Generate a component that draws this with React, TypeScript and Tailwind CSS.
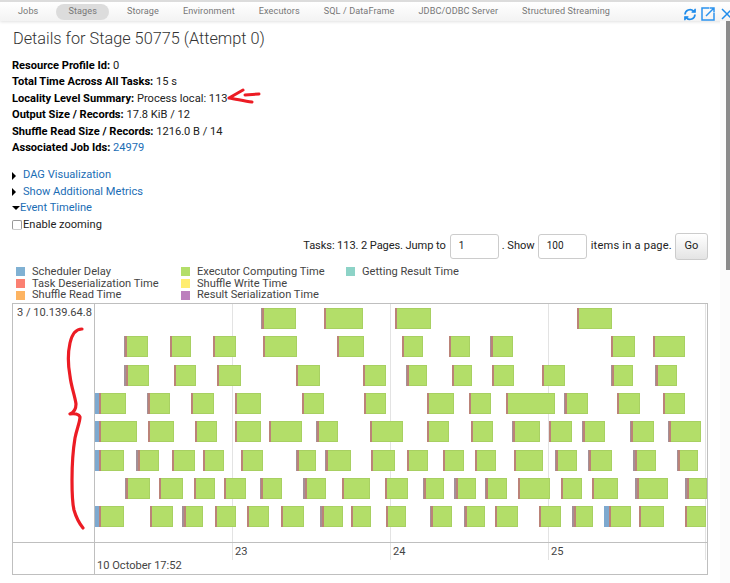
import React from 'react';

const TABS = ['Jobs', 'Stages', 'Storage', 'Environment', 'Executors', 'SQL / DataFrame', 'JDBC/ODBC Server', 'Structured Streaming'];

const SUMMARY: [string, string][] = [
  ['Resource Profile Id:', '0'],
  ['Total Time Across All Tasks:', '15 s'],
  ['Locality Level Summary:', 'Process local: 113'],
  ['Output Size / Records:', '17.8 KiB / 12'],
  ['Shuffle Read Size / Records:', '1216.0 B / 14'],
];

const LEGEND = [
  ['Scheduler Delay', 'bg-[#80b1d3]'],
  ['Executor Computing Time', 'bg-[#b3de69]'],
  ['Getting Result Time', 'bg-[#8dd3c7]'],
  ['Task Deserialization Time', 'bg-[#fb8072]'],
  ['Shuffle Write Time', 'bg-[#ffed6f]'],
  null,
  ['Shuffle Read Time', 'bg-[#fdb462]'],
  ['Result Serialization Time', 'bg-[#bc80bd]'],
  null,
];

// [start x, end x, blue width]
type Bar = [number, number, number?];

const ROWS: Bar[][] = [
  [[261, 296, 1], [324, 363], [395, 431], [577, 612]],
  [[124, 148, 1], [170, 191], [213, 236], [263, 297], [337, 364], [402, 423], [449, 470], [490, 513, 1], [611, 635], [653, 685]],
  [[124, 149, 2], [174, 196], [217, 241], [296, 320], [363, 386], [406, 427, 1], [452, 472], [492, 514], [542, 565], [611, 633, 1], [655, 677, 1]],
  [[95, 126, 4], [147, 170, 1], [191, 214], [235, 261], [302, 324], [364, 386], [427, 454], [469, 491], [506, 555], [564, 588, 1], [617, 640], [663, 685]],
  [[95, 137, 4], [148, 174], [195, 217], [235, 261], [269, 302], [316, 338, 1], [370, 403], [427, 449], [471, 493], [512, 540, 1], [549, 572], [582, 605, 1], [630, 654, 1], [668, 701, 1]],
  [[95, 124, 4], [136, 159, 2], [172, 195], [203, 224], [241, 263], [296, 316, 1], [325, 351, 1], [371, 395], [407, 428], [443, 464], [475, 496], [514, 543], [555, 577, 1], [588, 612, 1], [633, 656, 2], [677, 698, 1]],
  [[125, 150, 1], [159, 183], [194, 215], [224, 246], [260, 282, 1], [303, 326, 2], [342, 370], [385, 408], [423, 444, 1], [454, 476, 2], [485, 507, 1], [518, 550], [561, 582], [592, 618], [635, 668, 2], [685, 707, 2]],
  [[95, 124, 4], [150, 173], [182, 203, 2], [215, 236], [247, 269], [281, 304], [320, 343, 2], [351, 371], [386, 406], [430, 452, 1], [464, 485, 1], [495, 518], [539, 561], [572, 593, 2], [604, 631, 5], [639, 664], [685, 706]],
];

const GRID_LINES = [232, 390, 548, 705];
const AXIS_LABELS: [number, string][] = [[232, '23'], [390, '24'], [548, '25']];

function TimelineBar({ bar }: { bar: Bar }) {
  const [start, end, blue = 0] = bar;
  return (
    <div
      className="absolute top-0 flex h-[21px]"
      style={{ left: start - 95, width: end - start }}
    >
      {blue > 0 && (
        <div
          className={blue > 2 ? 'h-full bg-[#7ea9cf]' : 'h-full bg-[#a39098]'}
          style={{ width: blue }}
        />
      )}
      <div className="h-full w-[2px] shrink-0 bg-[#bb8378]" />
      <div className="h-full flex-1 border border-l-0 border-[#a8d062] bg-[#b3de69]" />
    </div>
  );
}

export default function App() {
  return (
    <div
      className="relative h-[583px] w-[730px] overflow-hidden bg-white text-[11.1px] leading-[16.4px] text-[#222]"
      style={{ fontFamily: 'Roboto, "Open Sans", sans-serif' }}
    >
      {/* Nav bar */}
      <div className="flex h-[21px] items-center border-t-2 border-[#dcdcdc] bg-gradient-to-b from-white to-[#f3f3f3] pl-[18px] text-[9.1px] tracking-[0.1px] text-[#777] shadow-[0_1px_3px_rgba(0,0,0,0.12)]">
        {TABS.map((tab) => (
          <span
            key={tab}
            className={
              tab === 'Stages'
                ? 'mr-[18px] ml-[-6px] flex h-[16px] items-center rounded-[8px] bg-[#dcdcdc] px-[12px]'
                : 'mr-[24px] whitespace-nowrap'
            }
          >
            {tab}
          </span>
        ))}
      </div>

      {/* Toolbar icons */}
      <div className="absolute left-[683px] top-[7px] flex items-center gap-[4px]">
        <svg width="14" height="13" viewBox="0 0 14 13" fill="none" stroke="#1f8ceb" strokeWidth="1.7">
          <path d="M2 6.5a5 5 0 0 1 8.6-3.3" />
          <path d="M12 6.5a5 5 0 0 1-8.6 3.3" />
          <path d="M8.6 4.2h3.6V.8" strokeWidth="1.3" fill="#1f8ceb" />
          <path d="M5.4 8.8H1.8v3.4" strokeWidth="1.3" fill="#1f8ceb" />
        </svg>
        <svg width="14" height="14" viewBox="0 0 14 14" fill="none" stroke="#2b93ee" strokeWidth="1.5">
          <path d="M8 1H1v12h12V6" />
          <path d="M5 9l8-8M8.5 1H13v4.5" />
        </svg>
        <svg className="ml-[2px]" width="12" height="12" viewBox="0 0 12 12" fill="none" stroke="#1f8ceb" strokeWidth="1.5">
          <path d="M1 1l10 10M11 1L1 11" />
        </svg>
      </div>

      {/* Scrollbar */}
      <div className="absolute bottom-0 right-0 top-[21px] w-[10px] bg-[#fbfbfb]">
        <div className="ml-[6px] h-[249px] w-[4px] bg-[#8a8a8a]" />
      </div>

      <h3 className="ml-[13px] mt-[7px] text-[16.3px] font-light leading-[22px] text-[#333]">
        Details for Stage 50775 (Attempt 0)
      </h3>

      {/* Summary */}
      <ul className="ml-[12px] mt-[8px]">
        {SUMMARY.map(([label, value]) => (
          <li key={label}>
            <strong className="font-bold text-black">{label}</strong> {value}
          </li>
        ))}
        <li>
          <strong className="font-bold text-black">Associated Job Ids:</strong>{' '}
          <a className="text-[#1a6db5]">24979</a>
        </li>
      </ul>

      {/* Collapsible links */}
      <div className="ml-[12px] mt-[11px] text-[#1a6db5]">
        <div className="flex items-center">
          <span className="mr-[7px] h-0 w-0 border-y-[4px] border-l-[4px] border-y-transparent border-l-black" />
          DAG Visualization
        </div>
        <div className="flex items-center">
          <span className="mr-[7px] h-0 w-0 border-y-[4px] border-l-[4px] border-y-transparent border-l-black" />
          Show Additional Metrics
        </div>
        <div className="flex items-center">
          <span className="h-0 w-0 border-x-[4px] border-t-[4px] border-x-transparent border-t-black" />
          Event Timeline
        </div>
        <label className="flex items-center text-[#222]">
          <span className="mr-[1px] h-[10px] w-[10px] rounded-[2px] border border-[#999] border-b-[#ccc] bg-white" />
          Enable zooming
        </label>
      </div>

      {/* Pagination */}
      <div className="mr-[22px] flex h-[27px] items-center justify-end">
        <span className="tracking-[-0.1px]">Tasks: 113. 2 Pages. Jump to</span>
        <div className="ml-[4px] flex h-[25px] w-[49px] items-center rounded-[3px] border border-[#ccc] pl-[8px] text-[10px]">1</div>
        <span className="ml-[3px]">. Show</span>
        <div className="ml-[3px] flex h-[25px] w-[49px] items-center rounded-[3px] border border-[#ccc] pl-[8px] text-[10px]">100</div>
        <span className="ml-[4px] tracking-[0.2px]">items in a page.</span>
        <div className="ml-[3px] flex h-[27px] w-[33px] items-center justify-center rounded-[3px] border border-[#ccc] bg-gradient-to-b from-white to-[#e4e4e4]">Go</div>
      </div>

      {/* Legend */}
      <div className="ml-[16px] mt-[6px] grid w-[480px] grid-cols-[165px_165px_150px] leading-[11.7px] text-[#444]">
        {LEGEND.map((item, i) =>
          item ? (
            <div key={item[0]} className="flex h-[11.7px] items-center whitespace-nowrap">
              <span className={`h-[9px] w-[9px] ${item[1]}`} />
              <span className="ml-[7px]">{item[0]}</span>
            </div>
          ) : (
            <div key={i} />
          ),
        )}
      </div>

      {/* Timeline */}
      <div className="ml-[12px] mt-[2px] flex h-[272px] w-[696px] border border-[#bfbfbf]">
        <div className="flex w-[82px] shrink-0 flex-col border-r border-[#bfbfbf]">
          <div className="h-[238px] whitespace-nowrap pl-[4px] pt-[1px] text-[#444]">3 / 10.139.64.8</div>
          <div className="flex-1 border-t border-[#bfbfbf]" />
        </div>
        <div className="relative flex-1 overflow-hidden">
          {GRID_LINES.map((x) => (
            <div
              key={x}
              className="absolute top-0 h-[256px] w-px bg-[#e3e3e3]"
              style={{ left: x - 95 }}
            />
          ))}
          <div className="relative h-[238px] pt-[4px]">
            {ROWS.map((row, i) => (
              <div key={i} className="relative h-[28.3px]">
                {row.map((bar) => (
                  <TimelineBar key={bar[0]} bar={bar} />
                ))}
              </div>
            ))}
          </div>
          <div className="relative h-[32px] border-t border-[#bfbfbf] text-[#444]">
            {AXIS_LABELS.map(([x, label]) => (
              <span key={label} className="absolute top-[1px]" style={{ left: x - 95 + 3 }}>
                {label}
              </span>
            ))}
            <span className="absolute left-[2px] top-[15px]">10 October 17:52</span>
          </div>
        </div>
      </div>

      {/* Red pen annotations */}
      <svg className="pointer-events-none absolute left-0 top-0" width="730" height="583" fill="none" stroke="#ec1c24" strokeLinecap="round" strokeLinejoin="round">
        <path d="M229 98L243 90M229 98C236 99 244 101 252 102M245 95L259 94" strokeWidth="3" />
        <path d="M82 329C76 329 72 334 70 343C68 352 68 365 70 376C71 386 75 396 76 404C76 408 75 412 70 414C74 413 79 414 80 417C80 422 77 428 75 438C73 450 72 465 72 480C72 490 72 502 74 510C76 517 79 523 83 528" strokeWidth="3.2" />
      </svg>
    </div>
  );
}
